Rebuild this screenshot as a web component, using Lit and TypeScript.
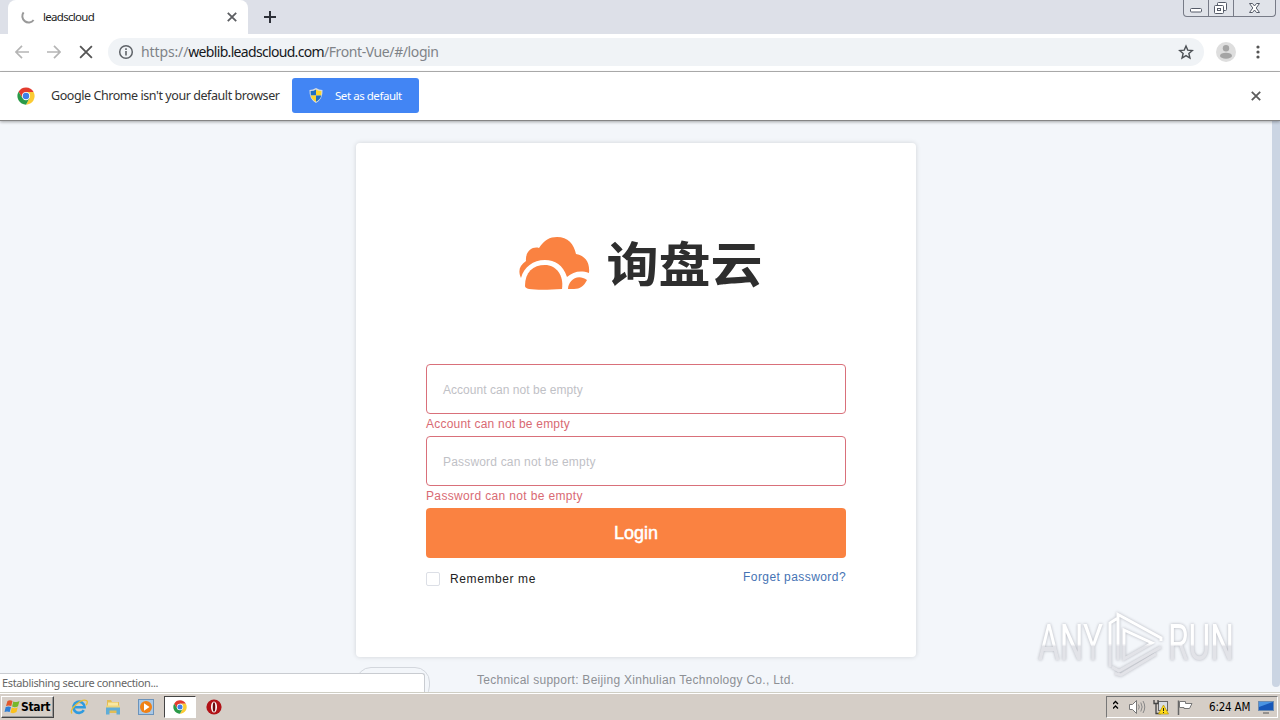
import { LitElement, html, css } from "lit";
import { customElement } from "lit/decorators.js";

const chromeLogo = html`<svg width="18" height="18" viewBox="0 0 48 48">
  <circle cx="24" cy="24" r="22" fill="#fff"/>
  <path d="M24 13H44.2A23 23 0 0 0 4.1 12.5L14.5 30Z" fill="#e33b2e"/>
  <path d="M33.5 29.5 24 47A23 23 0 0 0 44.2 13H24Z" fill="#fbcb34"/>
  <path d="M14.5 29.5 4.1 12.5A23 23 0 0 0 24 47L33.5 29.5Z" fill="#2a9a48"/>
  <circle cx="24" cy="24" r="11" fill="#fff"/><circle cx="24" cy="24" r="8.6" fill="#3f7fe8"/>
</svg>`;

const cross = (size: number, w: number, color: string) => html`<svg width=${size} height=${size} viewBox="0 0 10 10">
  <path d="M.8 .8 9.2 9.2M9.2 .8 .8 9.2" fill="none" stroke=${color} stroke-width=${w}/></svg>`;

@customElement("browser-chrome")
class BrowserChrome extends LitElement {
  static styles = css`
    :host { display: block; position: relative; z-index: 2; font-family: "Noto Sans", sans-serif; color: #222; }
    svg { display: block; flex: none; }
    .strip { height: 34px; background: #dde0e8; display: flex; align-items: flex-start; justify-content: space-between; }
    .left { display: flex; height: 34px; padding-left: 8px; }
    .tab { box-sizing: border-box; width: 240px; height: 34px; background: #fff; border-radius: 8px 8px 0 0; display: flex; align-items: center; padding: 0 11px 0 12px; }
    .title { flex: 1; margin: -2px 0 0 8px; font-size: 11.5px; letter-spacing: -.7px; }
    .plus { margin: 11px 0 0 16px; }
    .win { display: flex; box-sizing: border-box; width: 93px; height: 17px; margin-right: 4px; border: 1px solid #777b87; border-top: 0; border-radius: 0 0 4px 4px; background: #e0e3e9; }
    .bar { height: 37px; background: #fff; display: flex; align-items: center; border-bottom: 1px solid #b2b2b2; }
    .nav { display: flex; gap: 18px; padding-left: 15px; width: 93px; margin-top: -2px; }
    .omni { box-sizing: border-box; width: 1096px; height: 28px; border-radius: 14px; background: #f0f3f6; display: flex; align-items: center; padding: 0 10px; margin-top: -1px; }
    .url { flex: 1; margin: -2px 0 0 7px; font-size: 14px; letter-spacing: -.4px; color: #7f8388; white-space: nowrap; }
    .url b { font-weight: 400; color: #16181c; letter-spacing: -.68px; }
    .url .scheme { letter-spacing: -.12px; }
    .avatar { margin: -2px 0 0 12px; }
    .dots { margin: -1px 0 0 20px; }
    .info { height: 48px; background: #fff; border-bottom: 1px solid #858585; box-shadow: 0 1px 3px #0005; display: flex; align-items: center; padding: 0 19px 0 17px; }
    .msg { margin: -2px 0 0 16px; width: 241px; font-size: 12.5px; letter-spacing: -.43px; white-space: nowrap; color: #333; }
    .set { width: 127px; height: 35px; margin-top: -2px; border: 0; padding: 0 0 0 17px; border-radius: 3px; background: #4285f4; color: #fff; font: 11.5px "Noto Sans", sans-serif; letter-spacing: -.45px; display: flex; align-items: center; gap: 12px; white-space: nowrap; }
    .spacer { flex: 1; }
  `;
  render() {
    return html`
      <div class="strip">
        <div class="left">
          <div class="tab">
            <svg width="15" height="16" viewBox="0 0 15 16"><path d="M3.6 3.3A6 6 0 1 0 13.6 11" fill="none" stroke="#999" stroke-width="2"/></svg>
            <span class="title">leadscloud</span>${cross(10, 1.8, "#5c5e62")}
          </div>
          <svg class="plus" width="12" height="12"><path d="M6 0V12M0 6H12" stroke="#2d3038" stroke-width="2"/></svg>
        </div>
        <div class="win">
          <svg width="91" height="16" viewBox="0 0 91 16" fill="#fff" stroke="#555b68">
            <path d="M24.5 0V16M49.5 0V16" stroke="#777b87"/>
            <rect x="6.500" y="8.500" width="11" height="3.500" rx="1"/>
            <rect x="33.500" y="2.500" width="9" height="8" rx="1"/><rect x="30.500" y="5.500" width="9" height="8" rx="1"/><rect x="33.500" y="8.500" width="3" height="2"/>
            <path d="M65.500 3.500h3l2 2.500 2-2.500h3l-3.300 4.500 3.300 4.500h-3l-2-2.500-2 2.500h-3l3.300-4.500Z"/>
          </svg>
        </div>
      </div>
      <div class="bar">
        <div class="nav">
          <svg width="14" height="14" viewBox="0 0 14 14" fill="none" stroke="#b5b5b5" stroke-width="1.700"><path d="M14 7H1M7 .8 .9 7 7 13.200"/></svg>
          <svg width="14" height="14" viewBox="0 0 14 14" fill="none" stroke="#b5b5b5" stroke-width="1.700"><path d="M0 7H13M7 .8 13.100 7 7 13.200"/></svg>
          ${cross(14, 1.3, "#555")}
        </div>
        <div class="omni">
          <svg width="16" height="16" viewBox="0 0 16 16"><circle cx="8" cy="8" r="6.300" fill="none" stroke="#5f6368" stroke-width="1.500"/><path d="M8 7V11.500M8 4.300V5.900" stroke="#5f6368" stroke-width="1.600"/></svg>
          <span class="url"><span class="scheme">https://</span><b>weblib.leadscloud.com</b>/Front-Vue/#/login</span>
          <svg width="16" height="16" viewBox="0 0 24 24"><path d="M12 3 14.600 9.200 21.500 9.800 16.300 14.300 17.900 21 12 17.400 6.100 21 7.700 14.300 2.500 9.800 9.400 9.200Z" fill="none" stroke="#4d5156" stroke-width="2.100"/></svg>
        </div>
        <svg class="avatar" width="20" height="20"><circle cx="10" cy="10" r="10" fill="#dedede"/><circle cx="10" cy="6.200" r="3.200" fill="#a5a5a5"/><ellipse cx="10" cy="13.700" rx="6" ry="3" fill="#a5a5a5"/></svg>
        <svg class="dots" width="4" height="14" fill="#555"><circle cx="2" cy="2" r="1.600"/><circle cx="2" cy="7" r="1.600"/><circle cx="2" cy="12" r="1.600"/></svg>
      </div>
      <div class="info">
        ${chromeLogo}
        <span class="msg">Google Chrome isn't your default browser</span>
        <button class="set">
          <svg width="14" height="15" viewBox="0 0 14 15"><path d="M7 0Q10 2 13.500 2 14 11 7 15 0 11 .5 2 4 2 7 0Z" fill="#d8dde2"/><path d="M7 1.500V7.500H1.800L1.600 3Q5 3 7 1.500Z" fill="#1f6fc4"/><path d="M7 1.500Q9 3 12.400 3L12.200 7.500H7Z" fill="#fbd52e"/><path d="M1.800 7.500H7V13.700Q2.500 11.500 1.800 7.500Z" fill="#fbd52e"/><path d="M12.200 7.500H7V13.700Q11.500 11.500 12.200 7.500Z" fill="#1f6fc4"/></svg>
          Set as default
        </button>
        <span class="spacer"></span>${cross(10, 1.8, "#5c5c5c")}
      </div>`;
  }
}

@customElement("login-page")
class LoginPage extends LitElement {
  static styles = css`
    :host { display: flex; position: relative; flex: 1; min-height: 0; flex-direction: column; background: #f3f6fa; font-family: "Liberation Sans", Arial, sans-serif; overflow: hidden; }
    .card { box-sizing: border-box; width: 560px; height: 514px; flex: none; margin: 22px 0 0 356px; padding: 94px 70px 0; background: #fff; border-radius: 4px; box-shadow: 0 0 5px #00000024; }
    .logo { height: 53px; margin: 0 0 74px 92.5px; display: flex; align-items: center; gap: 17px; }
    .brand { font: 700 52px/53px "Noto Sans CJK SC", sans-serif; color: #2e2e2e; white-space: nowrap; transform: translateY(-2px) scaleY(.92); }
    .field { box-sizing: border-box; height: 50px; border: 1px solid #d9707a; border-radius: 4px; padding: 0 16px; line-height: 50px; font-size: 12px; color: #bfc1c6; letter-spacing: .04px; }
    .error { height: 22px; line-height: 21px; font-size: 12px; color: #d96a73; letter-spacing: .22px; }
    .field.wide { letter-spacing: .18px; }
    .error.wide { letter-spacing: .35px; }
    .login { display: block; width: 420px; height: 50px; border: 0; border-radius: 4px; background: #fa8241; color: #fff; font: 400 18px "Liberation Sans", sans-serif; -webkit-text-stroke: .5px #fff; }
    .row { display: flex; justify-content: space-between; font-size: 12px; letter-spacing: .6px; margin-top: 11px; line-height: 16px; }
    .check { display: flex; align-items: center; gap: 10px; color: #222; margin-top: 2px; }
    .box { box-sizing: border-box; width: 14px; height: 14px; border: 1px solid #dcdfe6; border-radius: 2px; }
    .forget { color: #4673b4; letter-spacing: .43px; }
    .tech { margin: 14px 0 0 477px; font-size: 12px; line-height: 18px; letter-spacing: .28px; color: #8d9095; }
    .pill { position: absolute; left: 356px; top: 546px; width: 72px; height: 32px; border: 1px solid #d3d7dd; border-radius: 15px; }
    .scroll { position: absolute; right: 0; top: 0; width: 8px; height: 566px; background: #cbd5e3; border-radius: 0 0 4px 4px; }
    .status { position: absolute; left: 0; bottom: 0; box-sizing: border-box; width: 425px; height: 19px; background: #fff; border: 1px solid #c9ccd1; border-left: 0; border-bottom: 0; border-radius: 0 3px 0 0; padding-left: 2px; font: 11px/18px "Noto Sans", sans-serif; letter-spacing: -.37px; color: #666; }
    .mark { position: absolute; left: 1034px; top: 485px; overflow: visible; filter: drop-shadow(0 0 1.5px #a0a2abcc); }
  `;
  render() {
    return html`
      <div class="card">
        <div class="logo">
          <svg width="71" height="53" viewBox="0 0 71 53" fill="#fa8241">
            <path d="M2 41C-1 34 0 29 7 24 6 15 13 9 20 11 25 3 31 0 38 0 49 0 55 7 57 17 67 19 71 26 70 36 61 33 54 35 48 40 44 28 36 23 26 23 14 23 5 30 2 41Z"/>
            <path d="M6 49C6 35 14 28 26 28 37 28 45 38 43 52 29 53 17 53 10 52Q6 51 6 49Z"/>
            <path d="M49 52C49 44 58 36 68 43 65 49 61 52 55 52Z"/>
          </svg>
          <span class="brand">询盘云</span>
        </div>
        <div class="field">Account can not be empty</div>
        <div class="error">Account can not be empty</div>
        <div class="field wide">Password can not be empty</div>
        <div class="error wide">Password can not be empty</div>
        <button class="login">Login</button>
        <div class="row">
          <label class="check"><span class="box"></span>Remember me</label>
          <span class="forget">Forget password?</span>
        </div>
      </div>
      <div class="tech">Technical support: Beijing Xinhulian Technology Co., Ltd.</div>
      <div class="pill"></div>
      <div class="scroll"></div>
      <svg class="mark" width="220" height="72" viewBox="0 0 220 72">
        <defs>
          <linearGradient id="g" x1="0" y1="0" x2="0" y2="1"><stop offset=".52" stop-color="#fff"/><stop offset=".56" stop-color="#e2e3e8"/></linearGradient>
          <linearGradient id="h" gradientUnits="userSpaceOnUse" x1="0" y1="0" x2="0" y2="72"><stop offset=".52" stop-color="#fff"/><stop offset=".56" stop-color="#e2e3e8"/></linearGradient>
        </defs>
        <g fill="url(#g)" font-family="Roboto, sans-serif" font-size="50">
          <text x="4" y="54" textLength="65" lengthAdjust="spacingAndGlyphs">ANY</text>
          <text x="134" y="54" textLength="66" lengthAdjust="spacingAndGlyphs">RUN</text>
        </g>
        <path d="M76 61V17L83 12.500M84 54V8.500L127 32V35M90 24V53L118 37ZM78 61 85 65 127 41M81 67.500 87 69 122 48" fill="none" stroke="url(#h)" stroke-width="3"/>
      </svg>
      <div class="status">Establishing secure connection...</div>`;
  }
}

@customElement("task-bar")
class TaskBar extends LitElement {
  static styles = css`
    :host { box-sizing: border-box; display: flex; height: 28px; background: #d5cec7; border-top: 1px solid #cfcec4; box-shadow: inset 0 1px #fff; align-items: center; padding: 1px 0 0 1px; font-family: "DejaVu Sans Condensed", sans-serif; color: #000; }
    svg { display: block; flex: none; }
    .start { box-sizing: border-box; width: 53px; height: 22px; display: flex; align-items: center; gap: 0; padding-left: 2px; border: 1px solid; border-color: #fff #444 #444 #fff; box-shadow: inset -1px -1px #999; font: 700 12px "DejaVu Sans Condensed", sans-serif; letter-spacing: -.3px; }
    .apps { display: flex; align-items: center; padding-left: 16px; gap: 16px; }
    .active { box-sizing: border-box; width: 32px; height: 22px; margin: 0 -6px; border: 1px solid; border-color: #444 #fff #fff #444; background: #fff; display: grid; place-items: center; }
    .active svg { width: 14px; height: 14px; }
    .tray { box-sizing: border-box; margin-left: auto; margin-right: 2px; width: 172px; height: 22px; border: 1px solid; border-color: #777 #fff #fff #777; display: flex; align-items: center; padding-left: 6px; }
    .clock { font-size: 11.5px; letter-spacing: -.2px; width: 49px; margin-left: 1px; white-space: nowrap; }
  `;
  render() {
    return html`
      <div class="start">
        <svg width="17" height="16" viewBox="0 0 16 16"><path d="M3 2Q5.500 .5 8 2L6.800 7Q4 6 1.500 7Z" fill="#e2582b"/><path d="M8.800 2.400Q12 4 15 2L13.500 7.200Q10.500 9 7.600 7.400Z" fill="#76b82a"/><path d="M1.200 8Q4 7 6.500 8L5.200 13Q2.500 12 0 13Z" fill="#2f7fd6"/><path d="M7.300 8.400Q10.500 10 13.200 8.200L12 13Q9 15 6 13.500Z" fill="#fbc11d"/></svg>Start
      </div>
      <div class="apps">
        <svg width="18" height="18" viewBox="0 0 18 18" fill="none"><path d="M13.800 12.200A5.600 5.600 0 1 1 14.600 9.300H4" stroke="#2f9bdf" stroke-width="2.600"/><path d="M2 15.500C-1.500 11 12 0 16.500 2.600 18 3.500 17 6 16 7.200" stroke="#e9bd35" stroke-width="1.300"/></svg>
        <svg width="18" height="18" viewBox="0 0 18 18"><path d="M3 2H7L8 4H15V15H3Z" fill="#e3bd55"/><path d="M4 4.500H14V10H4Z" fill="#f8e8a2"/><path d="M2 8H16V16.500H12.500V12.500H5.500V16.500H2Z" fill="#5fadd8"/><path d="M2 7.500H16V9.500H2Z" fill="#eed57c"/></svg>
        <svg width="16" height="16" viewBox="0 0 16 16"><rect x=".5" y=".5" width="15" height="15" fill="#a9c8e6" stroke="#6b93bb"/><circle cx="8" cy="8" r="6" fill="#f08116"/><path d="M6 4.300 11.500 8 6 11.700Z" fill="#fff"/></svg>
        <div class="active">${chromeLogo}</div>
        <svg width="16" height="16" viewBox="0 0 16 16"><circle cx="8" cy="8" r="7.600" fill="#b11217"/><ellipse cx="8" cy="8" rx="3" ry="5.500" fill="#fff"/><ellipse cx="8" cy="8" rx="1.300" ry="4.800" fill="#6b0a0d"/></svg>
      </div>
      <div class="tray">
        <svg width="95" height="18" viewBox="0 0 95 18">
          <path d="M0 6 2.500 3.500 5 6M0 10.500 2.500 8 5 10.500" fill="none" stroke="#000" stroke-width="1.300"/>
          <path d="M16.500 6.500H19.500L23.500 2.500V15.500L19.500 11.500H16.500Z" fill="#fff" stroke="#777"/><path d="M25.500 6.500Q27 9 25.500 11.500M27.800 4.500Q30.500 9 27.800 13.500M30 3Q33.500 9 30 15" fill="none" stroke="#888"/>
          <rect x="45.500" y="3.500" width="9" height="9" fill="#d8dde2" stroke="#666"/><path d="M41 2V5.500H45V2M43 5.500V15.500H48" fill="none" stroke="#444" stroke-width="1.300"/><path d="M50.500 7 55.500 16H45.500Z" fill="#ffdb18" stroke="#b79500" stroke-width=".7"/><path d="M50.500 10V13M50.500 14V15" stroke="#222"/>
          <path d="M65.500 17V2.500" stroke="#666" stroke-width="1.500"/><path d="M66.500 3.500H72.500V5.500H79L76.500 10.500H71V9.500H66.500Z" fill="#fff" stroke="#777"/>
        </svg>
        <span class="clock">6:24 AM</span>
        <svg width="16" height="14" viewBox="0 0 16 14"><rect x=".5" y="1.500" width="15" height="9" fill="#1857b8" stroke="#6f8caf"/><path d="M1 2H15L1 7Z" fill="#4b94e2"/><path d="M5 13H11" stroke="#555"/></svg>
      </div>`;
  }
}

@customElement("app-root")
class AppRoot extends LitElement {
  static styles = css`:host { display: flex; flex-direction: column; width: 1280px; height: 720px; overflow: hidden; background: #fff; }`;
  render() {
    return html`<browser-chrome></browser-chrome><login-page></login-page><task-bar></task-bar>`;
  }
}
